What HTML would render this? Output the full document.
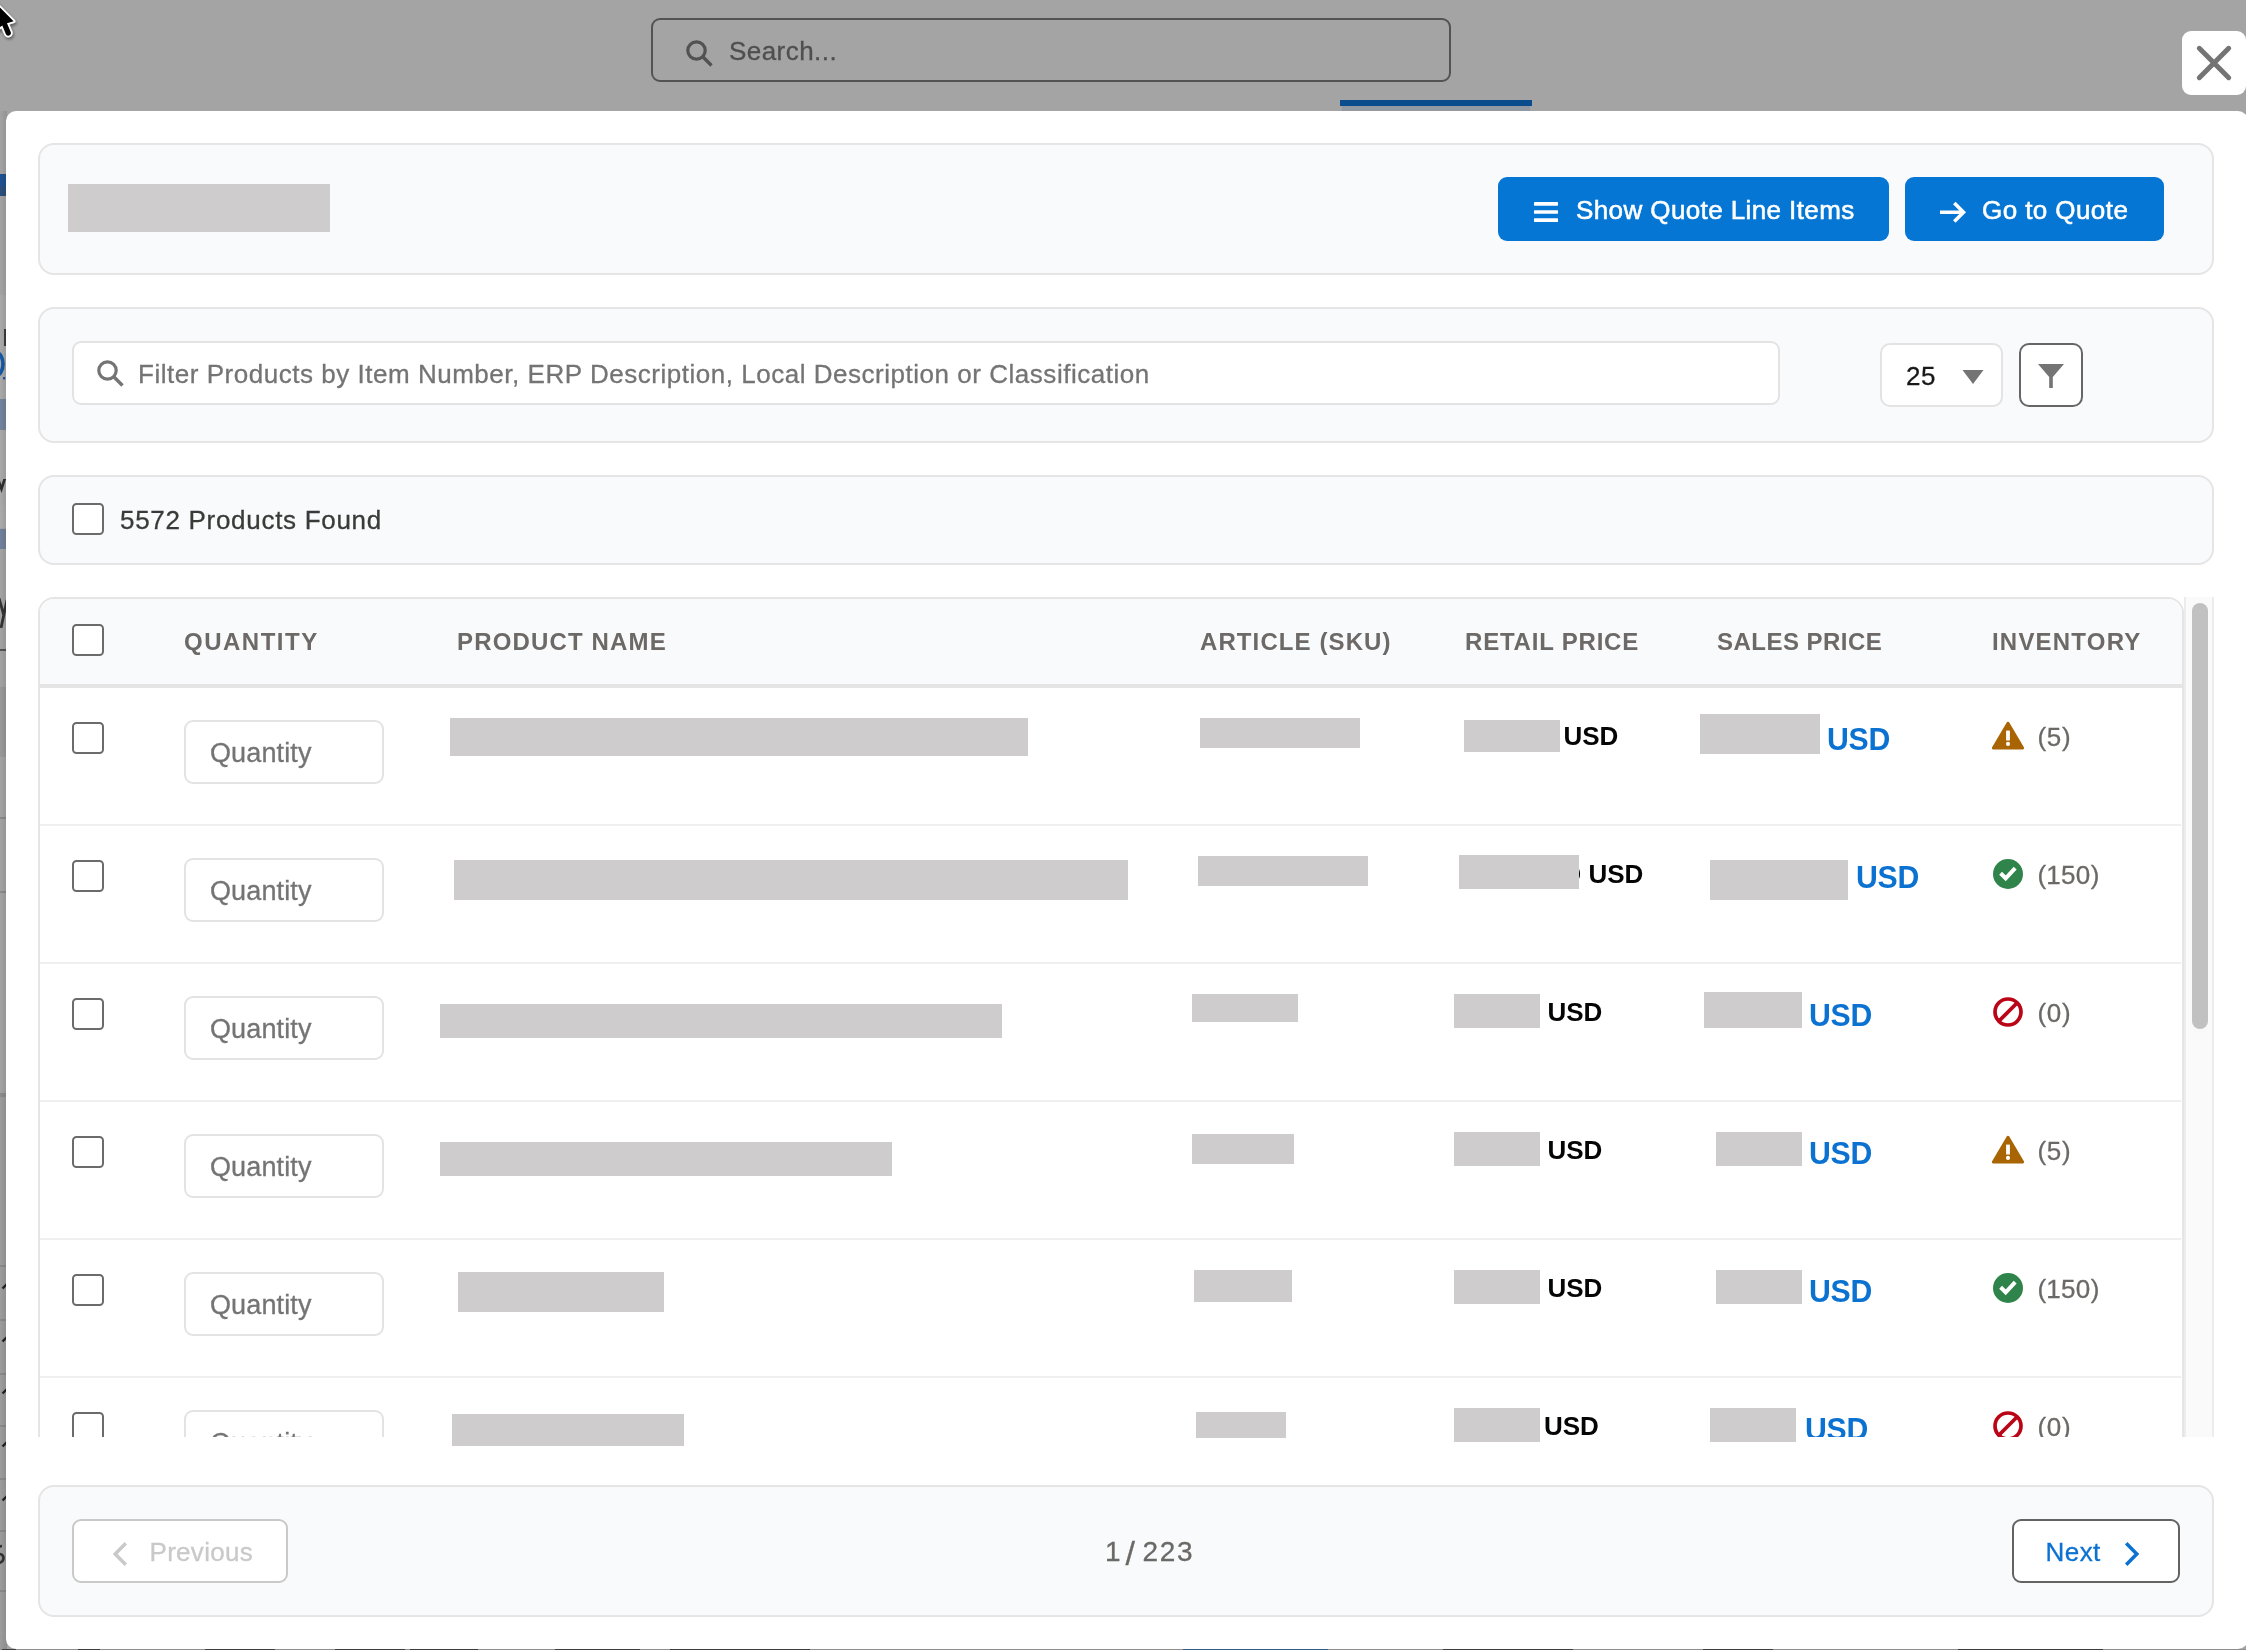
<!DOCTYPE html>
<html lang="en">
<head>
<meta charset="utf-8">
<title>Product Selector</title>
<style>
*{box-sizing:border-box;margin:0;padding:0}
html,body{width:2246px;height:1650px;overflow:hidden}
body{background:#a4a4a4;font-family:"Liberation Sans",sans-serif;position:relative}
#wrap{position:absolute;left:0;top:0;width:2246px;height:1650px;overflow:hidden;will-change:transform}
.abs,.t,.bar,.cb,.qty,.card,svg{position:absolute}
.t{white-space:nowrap;line-height:1;font-size:26px;-webkit-text-stroke:.3px}
.bar{background:#cecccd}
.card{background:#f9fafc;border:2px solid #e5e5e5;border-radius:16px}
.cb{width:32px;height:32px;border:2px solid #6b6b6b;border-radius:4.5px;background:#fff}
.qty{width:200px;height:64px;border:2px solid #e3e3e3;border-radius:9px;background:#fff}
.hd{font-weight:bold;font-size:24px;letter-spacing:2px;color:#6c6966;-webkit-text-stroke:0}
.ph{color:#747474}
.usd{font-weight:bold;font-size:26px;color:#050505;-webkit-text-stroke:0}
.susd{font-weight:bold;font-size:31px;color:#0b72d1;-webkit-text-stroke:0;transform:scaleX(.975);transform-origin:0 0}
.inv{color:#6b6966}
.sep{position:absolute;left:40px;width:2141px;height:2px;background:#efefef}
</style>
</head>
<body>
<div id="wrap">

<!-- page chrome visible behind the backdrop -->
<div class="abs" id="topsearch" style="left:651px;top:18px;width:800px;height:64px;border:2px solid #535353;border-radius:9px"></div>
<svg style="left:685px;top:39px" width="28" height="28" viewBox="0 0 28 28"><circle cx="11.5" cy="11.5" r="8.7" fill="none" stroke="#525252" stroke-width="3.2"/><path d="M17.8 17.8 L26.5 26.5" stroke="#525252" stroke-width="3.4"/></svg>
<div class="t" style="left:729px;top:38px;color:#4f4f4f;letter-spacing:.45px">Search...</div>
<div class="abs" style="left:1340px;top:100px;width:192px;height:6px;background:#0b4d8c"></div>
<div class="abs" style="left:1342px;top:106px;width:188px;height:5px;background:#9299a3"></div>

<!-- left sliver of background page -->
<div class="abs" style="left:0;top:111px;width:7px;height:1539px;overflow:hidden">
<div class="abs" style="left:0px;top:63px;width:7px;height:22px;background:#1f5190"></div>
<div class="abs" style="left:0px;top:75px;width:7px;height:10px;background:#2b4f7c"></div>
<div class="abs" style="left:0px;top:184px;width:7px;height:210px;background:#a9a9a9"></div>
<div class="abs" style="left:0px;top:288px;width:7px;height:31px;background:#73849c"></div>
<div class="abs" style="left:0px;top:394px;width:7px;height:23px;background:#ababab"></div>
<div class="abs" style="left:0px;top:418px;width:7px;height:20px;background:#71809b"></div>
<div class="abs" style="left:0px;top:576px;width:7px;height:70px;background:#999999"></div>
<div class="abs" style="left:0px;top:982px;width:7px;height:557px;background:#9c9c9c"></div>
<div class="abs" style="left:4px;top:218px;width:2px;height:17px;background:#3c3c3c"></div>
<svg style="left:0;top:240px" width="7" height="30" viewBox="0 0 7 30"><ellipse cx="-4" cy="13" rx="7" ry="11.5" fill="none" stroke="#1458a6" stroke-width="3.6"/><rect x="3" y="26" width="2.2" height="2.4" fill="#1458a6"/></svg>
<svg style="left:0;top:368px" width="7" height="18" viewBox="0 0 7 18"><path d="M-2 0 L1.5 10 L5 -1" fill="none" stroke="#2e2e2e" stroke-width="2.6"/></svg>
<svg style="left:0;top:487px" width="7" height="34" viewBox="0 0 7 34"><path d="M-1 0 L4 18 M7 2 L1 30" fill="none" stroke="#333" stroke-width="2.8"/></svg>
<div class="abs" style="left:0px;top:538px;width:7px;height:2px;background:#555555"></div>
<div class="abs" style="left:0px;top:706px;width:7px;height:1.5px;background:#8a8a8a"></div>
<div class="abs" style="left:0px;top:780px;width:7px;height:1.5px;background:#8a8a8a"></div>
<div class="abs" style="left:0px;top:1154px;width:7px;height:1.5px;background:#8a8a8a"></div>
<div class="abs" style="left:0px;top:1208px;width:7px;height:1.5px;background:#8a8a8a"></div>
<div class="abs" style="left:0px;top:1262px;width:7px;height:1.5px;background:#8a8a8a"></div>
<div class="abs" style="left:0px;top:1314px;width:7px;height:1.5px;background:#8a8a8a"></div>
<div class="abs" style="left:0px;top:1367px;width:7px;height:1.5px;background:#8a8a8a"></div>
<div class="abs" style="left:0px;top:1419px;width:7px;height:1.5px;background:#8a8a8a"></div>
<div class="abs" style="left:0px;top:1479px;width:7px;height:1.5px;background:#8a8a8a"></div>
<div class="abs" style="left:0px;top:982px;width:7px;height:4px;background:#8c8c8c"></div>
<svg style="left:0;top:1171px" width="7" height="9" viewBox="0 0 7 9"><path d="M2.5 6.5 L7 2" stroke="#222" stroke-width="2.4"/></svg>
<svg style="left:0;top:1224px" width="7" height="9" viewBox="0 0 7 9"><path d="M2.5 6.5 L7 2" stroke="#222" stroke-width="2.4"/></svg>
<svg style="left:0;top:1276px" width="7" height="9" viewBox="0 0 7 9"><path d="M2.5 6.5 L7 2" stroke="#222" stroke-width="2.4"/></svg>
<svg style="left:0;top:1329px" width="7" height="9" viewBox="0 0 7 9"><path d="M2.5 6.5 L7 2" stroke="#222" stroke-width="2.4"/></svg>
<svg style="left:0;top:1383px" width="7" height="9" viewBox="0 0 7 9"><path d="M2.5 6.5 L7 2" stroke="#222" stroke-width="2.4"/></svg>
<svg style="left:0;top:1433px" width="7" height="22" viewBox="0 0 7 22"><path d="M2 2 C-3 2 -3 9 0 10 C5 11.5 5 19 -3 19" fill="none" stroke="#333" stroke-width="2.6"/></svg>
<div class="abs" style="left:0;top:0;width:7px;height:1539px;background:linear-gradient(to right,rgba(0,0,0,0),rgba(0,0,0,.10))"></div>
</div>
<div class="abs" style="left:0;top:1649px;width:2246px;height:1px;background:#8e8e8e"></div>
<div class="abs" style="left:2px;top:1649px;width:14px;height:1px;background:#222;opacity:.75"></div>
<div class="abs" style="left:78px;top:1649px;width:22px;height:1px;background:#222;opacity:.75"></div>
<div class="abs" style="left:205px;top:1649px;width:70px;height:1px;background:#222;opacity:.75"></div>
<div class="abs" style="left:335px;top:1649px;width:70px;height:1px;background:#222;opacity:.75"></div>
<div class="abs" style="left:410px;top:1649px;width:68px;height:1px;background:#222;opacity:.75"></div>
<div class="abs" style="left:555px;top:1649px;width:85px;height:1px;background:#222;opacity:.75"></div>
<div class="abs" style="left:670px;top:1649px;width:140px;height:1px;background:#222;opacity:.75"></div>
<div class="abs" style="left:1183px;top:1649px;width:145px;height:1px;background:#0f4a86;opacity:.75"></div>
<div class="abs" style="left:1443px;top:1649px;width:130px;height:1px;background:#222;opacity:.75"></div>
<div class="abs" style="left:1703px;top:1649px;width:70px;height:1px;background:#222;opacity:.75"></div>
<div class="abs" style="left:1958px;top:1649px;width:145px;height:1px;background:#222;opacity:.75"></div>
<svg style="left:0;top:0" width="26" height="46" viewBox="0 0 26 46"><defs><filter id="cs" x="-50%" y="-50%" width="200%" height="200%"><feGaussianBlur in="SourceAlpha" stdDeviation="1.6"/><feOffset dx="0.5" dy="1.8"/><feComponentTransfer><feFuncA type="linear" slope=".45"/></feComponentTransfer><feMerge><feMergeNode/><feMergeNode in="SourceGraphic"/></feMerge></filter></defs><g filter="url(#cs)"><path d="M-8 -0.5 L13.6 21.2 L7 23.3 L10.7 32 A2.6 2.6 0 0 1 5.8 33.9 L2.3 25.5 L-8 32.6 Z" fill="#fff" stroke="#fff" stroke-width="3.6" stroke-linejoin="round"/><path d="M-8 -0.5 L13.6 21.2 L7 23.3 L10.7 32 A2.6 2.6 0 0 1 5.8 33.9 L2.3 25.5 L-8 32.6 Z" fill="#000"/></g></svg>

<!-- close button -->
<div class="abs" style="left:2182px;top:31px;width:64px;height:64px;background:#fff;border-radius:9px"></div>
<svg style="left:2182px;top:31px" width="64" height="64" viewBox="0 0 64 64"><path d="M17.3 17.3 L46.7 46.7 M46.7 17.3 L17.3 46.7" stroke="#747474" stroke-width="5" stroke-linecap="round"/></svg>

<!-- modal -->
<div class="abs" id="modal" style="left:6px;top:111px;width:2242px;height:1538px;background:#fff;border-radius:10px"></div>

<!-- card 1: header -->
<div class="card" style="left:38px;top:143px;width:2176px;height:132px"></div>
<div class="bar" style="left:68px;top:184px;width:262px;height:48px"></div>
<div class="abs" style="left:1498px;top:177px;width:391px;height:64px;background:#0576d4;border-radius:9px"></div>
<svg style="left:1534px;top:200px" width="24" height="24" viewBox="0 0 24 24"><g fill="#fff"><rect x="0" y="2" width="24" height="3.7" rx=".6"/><rect x="0" y="10.15" width="24" height="3.7" rx=".6"/><rect x="0" y="18.3" width="24" height="3.7" rx=".6"/></g></svg>
<div class="t" style="left:1576px;top:197px;color:#fff;letter-spacing:.4px;-webkit-text-stroke:.55px">Show Quote Line Items</div>
<div class="abs" style="left:1905px;top:177px;width:259px;height:64px;background:#0576d4;border-radius:9px"></div>
<svg style="left:1938px;top:200px" width="30" height="24" viewBox="0 0 30 24"><path d="M2 12.2 H25.5 M16.3 3 L25.5 12.2 L16.3 21.4" fill="none" stroke="#fff" stroke-width="3.6" stroke-linecap="butt" stroke-linejoin="miter"/></svg>
<div class="t" style="left:1982px;top:197px;color:#fff;letter-spacing:.42px;-webkit-text-stroke:.55px">Go to Quote</div>

<!-- card 2: filter -->
<div class="card" style="left:38px;top:307px;width:2176px;height:136px"></div>
<div class="abs" style="left:72px;top:341px;width:1708px;height:64px;border:2px solid #e3e3e3;border-radius:9px;background:#fff"></div>
<svg style="left:96px;top:359px" width="28" height="28" viewBox="0 0 28 28"><circle cx="11.5" cy="11.5" r="8.7" fill="none" stroke="#747474" stroke-width="3.2"/><path d="M17.8 17.8 L26.5 26.5" stroke="#747474" stroke-width="3.4"/></svg>
<div class="t ph" style="left:138px;top:361px;letter-spacing:.525px">Filter Products by Item Number, ERP Description, Local Description or Classification</div>
<div class="abs" style="left:1880px;top:343px;width:123px;height:64px;border:2px solid #e3e3e3;border-radius:10px;background:#fff"></div>
<div class="t" style="left:1906px;top:363px;color:#181818;letter-spacing:.5px">25</div>
<svg style="left:1962px;top:370px" width="22" height="14" viewBox="0 0 22 14"><path d="M0.5 0 H21.5 L11 14 Z" fill="#747474"/></svg>
<div class="abs" style="left:2019px;top:343px;width:64px;height:64px;border:2px solid #666;border-radius:10px;background:#fff"></div>
<svg style="left:2037px;top:363px" width="28" height="26" viewBox="0 0 28 26"><path d="M1 1 H27 L15.8 14 V25 H12.2 V14 Z" fill="#747474"/></svg>

<!-- card 3: products found -->
<div class="card" style="left:38px;top:475px;width:2176px;height:90px"></div>
<div class="cb" style="left:72px;top:503px"></div>
<div class="t" style="left:120px;top:507px;color:#3a3a38;letter-spacing:.7px">5572 Products Found</div>

<!-- table -->
<div class="abs" id="tablewrap" style="left:38px;top:597px;width:2176px;height:840px;overflow:hidden">
  <div class="abs" style="left:0;top:0;width:2146px;height:1000px;border:2px solid #e5e5e5;border-radius:16px;background:#fff;overflow:hidden">
    <div class="abs" style="left:0;top:0;width:2146px;height:86px;background:#f9fafc"></div>
    <div class="abs" style="left:0;top:85px;width:2146px;height:4px;background:#e5e5e5"></div>
  </div>
  <!-- scrollbar -->
  <div class="abs" style="left:2146px;top:0;width:30px;height:1000px;background:#fafafa;border-left:2px solid #ececec;border-right:2px solid #ececec"></div>
  <div class="abs" style="left:2154px;top:6px;width:16px;height:426px;background:#c1c1c1;border-radius:8px"></div>
</div>

<div class="cb" style="left:72px;top:624px"></div>
<div class="t hd" style="left:184px;top:630px;letter-spacing:1.5px">QUANTITY</div>
<div class="t hd" style="left:457px;top:630px;letter-spacing:1.15px">PRODUCT NAME</div>
<div class="t hd" style="left:1200px;top:630px;letter-spacing:1.1px">ARTICLE (SKU)</div>
<div class="t hd" style="left:1465px;top:630px;letter-spacing:.8px">RETAIL PRICE</div>
<div class="t hd" style="left:1717px;top:630px;letter-spacing:.48px">SALES PRICE</div>
<div class="t hd" style="left:1992px;top:630px;letter-spacing:1.2px">INVENTORY</div>

<div id="rows">
<div class="abs" id="rowclip" style="left:0;top:0;width:2246px;height:1437px;overflow:hidden">
<div class="cb" style="left:72px;top:722px"></div>
<div class="qty" style="left:184px;top:720px"></div>
<div class="t ph" style="left:210px;top:740px;font-size:27px;letter-spacing:.12px">Quantity</div>
<div class="t usd" style="left:1563.5px;top:723px">USD</div>
<div class="t susd" style="left:1827.4px;top:723.8px;letter-spacing:-.3px">USD</div>
<svg style="left:1991px;top:721px" width="34" height="30" viewBox="0 0 34 30"><path d="M17 2.2 L31.6 27 H2.4 Z" fill="#a96404" stroke="#a96404" stroke-width="3" stroke-linejoin="round"/><rect x="15.1" y="9.6" width="3.8" height="9.9" fill="#fff"/><circle cx="17" cy="22.9" r="2.05" fill="#fff"/></svg>
<div class="t inv" style="left:2037.4px;top:724px;letter-spacing:0.8px">(5)</div>
<div class="sep" style="top:824px"></div>
<div class="cb" style="left:72px;top:860px"></div>
<div class="qty" style="left:184px;top:858px"></div>
<div class="t ph" style="left:210px;top:878px;font-size:27px;letter-spacing:.12px">Quantity</div>
<div class="t usd" style="left:1588.5px;top:861px">USD</div>
<div class="t susd" style="left:1855.9px;top:861.8px;letter-spacing:-.3px">USD</div>
<svg style="left:1992px;top:858px" width="32" height="32" viewBox="0 0 32 32"><circle cx="16" cy="16" r="15" fill="#2e844a"/><path d="M8.6 15.3 L13.7 20.3 L23.2 10.1" fill="none" stroke="#fff" stroke-width="4" stroke-linecap="butt" stroke-linejoin="miter"/></svg>
<div class="t inv" style="left:2037.4px;top:862px;letter-spacing:0.3px">(150)</div>
<div class="sep" style="top:962px"></div>
<div class="cb" style="left:72px;top:998px"></div>
<div class="qty" style="left:184px;top:996px"></div>
<div class="t ph" style="left:210px;top:1016px;font-size:27px;letter-spacing:.12px">Quantity</div>
<div class="t usd" style="left:1547.5px;top:999px">USD</div>
<div class="t susd" style="left:1808.9px;top:999.8px;letter-spacing:-.3px">USD</div>
<svg style="left:1992px;top:996px" width="32" height="32" viewBox="0 0 32 32"><circle cx="16" cy="16" r="13" fill="none" stroke="#ba0517" stroke-width="3.7"/><path d="M7 25 L25 7" stroke="#ba0517" stroke-width="3.8"/></svg>
<div class="t inv" style="left:2037.4px;top:1000px;letter-spacing:0.8px">(0)</div>
<div class="sep" style="top:1100px"></div>
<div class="cb" style="left:72px;top:1136px"></div>
<div class="qty" style="left:184px;top:1134px"></div>
<div class="t ph" style="left:210px;top:1154px;font-size:27px;letter-spacing:.12px">Quantity</div>
<div class="t usd" style="left:1547.5px;top:1137px">USD</div>
<div class="t susd" style="left:1808.9px;top:1137.8px;letter-spacing:-.3px">USD</div>
<svg style="left:1991px;top:1135px" width="34" height="30" viewBox="0 0 34 30"><path d="M17 2.2 L31.6 27 H2.4 Z" fill="#a96404" stroke="#a96404" stroke-width="3" stroke-linejoin="round"/><rect x="15.1" y="9.6" width="3.8" height="9.9" fill="#fff"/><circle cx="17" cy="22.9" r="2.05" fill="#fff"/></svg>
<div class="t inv" style="left:2037.4px;top:1138px;letter-spacing:0.8px">(5)</div>
<div class="sep" style="top:1238px"></div>
<div class="cb" style="left:72px;top:1274px"></div>
<div class="qty" style="left:184px;top:1272px"></div>
<div class="t ph" style="left:210px;top:1292px;font-size:27px;letter-spacing:.12px">Quantity</div>
<div class="t usd" style="left:1547.5px;top:1275px">USD</div>
<div class="t susd" style="left:1808.9px;top:1275.8px;letter-spacing:-.3px">USD</div>
<svg style="left:1992px;top:1272px" width="32" height="32" viewBox="0 0 32 32"><circle cx="16" cy="16" r="15" fill="#2e844a"/><path d="M8.6 15.3 L13.7 20.3 L23.2 10.1" fill="none" stroke="#fff" stroke-width="4" stroke-linecap="butt" stroke-linejoin="miter"/></svg>
<div class="t inv" style="left:2037.4px;top:1276px;letter-spacing:0.3px">(150)</div>
<div class="sep" style="top:1376px"></div>
<div class="cb" style="left:72px;top:1412px"></div>
<div class="qty" style="left:184px;top:1410px"></div>
<div class="t ph" style="left:210px;top:1430px;font-size:27px;letter-spacing:.12px">Quantity</div>
<div class="t usd" style="left:1544.0px;top:1413px">USD</div>
<div class="t susd" style="left:1804.9px;top:1413.8px;letter-spacing:-.3px">USD</div>
<svg style="left:1992px;top:1410px" width="32" height="32" viewBox="0 0 32 32"><circle cx="16" cy="16" r="13" fill="none" stroke="#ba0517" stroke-width="3.7"/><path d="M7 25 L25 7" stroke="#ba0517" stroke-width="3.8"/></svg>
<div class="t inv" style="left:2037.4px;top:1414px;letter-spacing:0.8px">(0)</div>
<div class="abs" style="left:1573.6px;top:867.5px;width:6.8px;height:12px;border-radius:50%;background:#050505"></div>
</div>
<div class="bar" style="left:450px;top:718px;width:578px;height:38px"></div>
<div class="bar" style="left:1200px;top:718px;width:160px;height:30px"></div>
<div class="bar" style="left:1464px;top:720px;width:96px;height:32px"></div>
<div class="bar" style="left:1700px;top:714px;width:120px;height:40px"></div>
<div class="bar" style="left:454px;top:860px;width:674px;height:40px"></div>
<div class="bar" style="left:1198px;top:856px;width:170px;height:30px"></div>
<div class="bar" style="left:1459px;top:855px;width:120px;height:34px"></div>
<div class="bar" style="left:1710px;top:860px;width:138px;height:40px"></div>
<div class="bar" style="left:440px;top:1004px;width:562px;height:34px"></div>
<div class="bar" style="left:1192px;top:994px;width:106px;height:28px"></div>
<div class="bar" style="left:1454px;top:994px;width:86px;height:34px"></div>
<div class="bar" style="left:1704px;top:992px;width:98px;height:36px"></div>
<div class="bar" style="left:440px;top:1142px;width:452px;height:34px"></div>
<div class="bar" style="left:1192px;top:1134px;width:102px;height:30px"></div>
<div class="bar" style="left:1454px;top:1132px;width:86px;height:34px"></div>
<div class="bar" style="left:1716px;top:1132px;width:86px;height:34px"></div>
<div class="bar" style="left:458px;top:1272px;width:206px;height:40px"></div>
<div class="bar" style="left:1194px;top:1270px;width:98px;height:32px"></div>
<div class="bar" style="left:1454px;top:1270px;width:86px;height:34px"></div>
<div class="bar" style="left:1716px;top:1270px;width:86px;height:34px"></div>
<div class="bar" style="left:452px;top:1414px;width:232px;height:32px"></div>
<div class="bar" style="left:1196px;top:1412px;width:90px;height:26px"></div>
<div class="bar" style="left:1454px;top:1408px;width:86px;height:34px"></div>
<div class="bar" style="left:1710px;top:1408px;width:86px;height:34px"></div>
</div>

<!-- footer card -->
<div class="card" style="left:38px;top:1485px;width:2176px;height:132px"></div>
<div class="abs" style="left:72px;top:1519px;width:216px;height:64px;border:2px solid #c9c9c9;border-radius:9px;background:#fff"></div>
<svg style="left:110px;top:1540px" width="20" height="28" viewBox="0 0 20 28"><path d="M15.8 3.2 L5.2 14 L15.8 24.8" fill="none" stroke="#c9c9c9" stroke-width="3.5" stroke-linecap="butt" stroke-linejoin="miter"/></svg>
<div class="t" style="left:149.5px;top:1539px;color:#c9c9c9;letter-spacing:.3px">Previous</div>
<div class="t" style="left:1105px;top:1538px;font-size:28px;color:#6b6966">1</div><div class="t" style="left:1125.6px;top:1535.5px;font-size:34px;color:#6b6966">/</div><div class="t" style="left:1142.6px;top:1538px;font-size:28px;color:#6b6966;letter-spacing:1.6px">223</div>
<div class="abs" style="left:2012px;top:1519px;width:168px;height:64px;border:2px solid #636363;border-radius:9px;background:#fff"></div>
<div class="t" style="left:2045.5px;top:1539px;color:#0b72d1;letter-spacing:.45px">Next</div>
<svg style="left:2122px;top:1540px" width="20" height="28" viewBox="0 0 20 28"><path d="M4.2 3.2 L14.8 14 L4.2 24.8" fill="none" stroke="#0b72d1" stroke-width="3.5"/></svg>

</div>
</body>
</html>
